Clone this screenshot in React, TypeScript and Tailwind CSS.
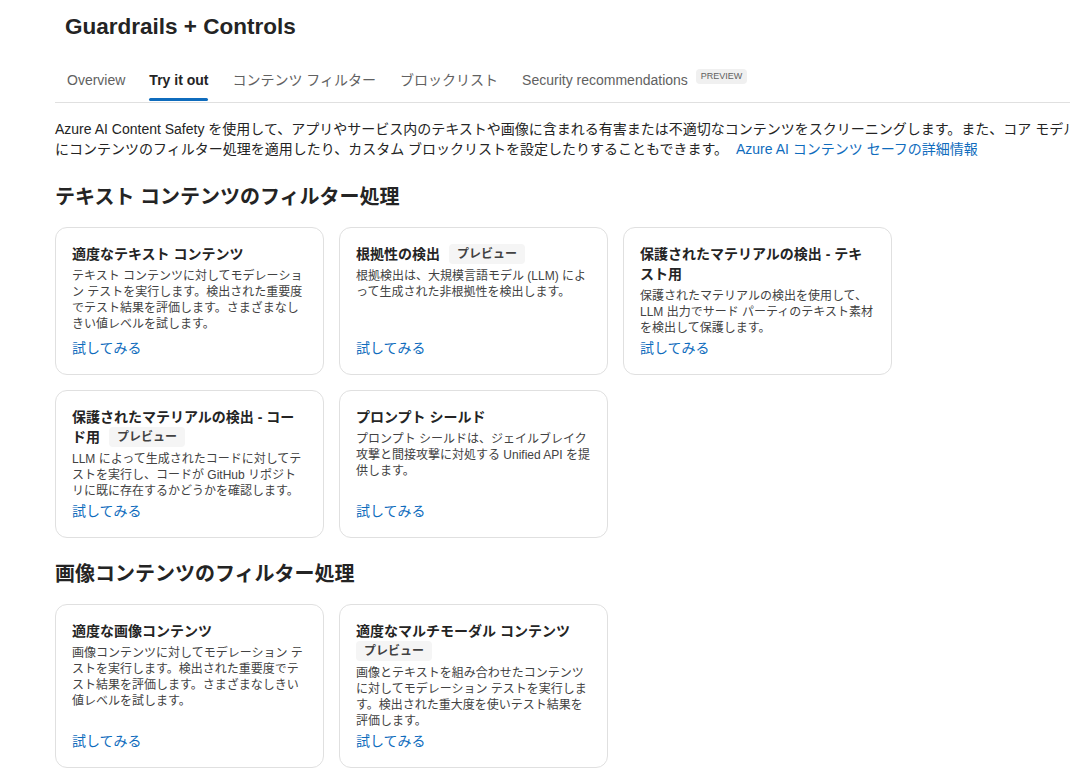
type Feature = {
  title: string;
  body: string;
  preview?: boolean;
};

const TABS = ["Overview", "Try it out", "コンテンツ フィルター", "ブロックリスト", "Security recommendations"];

const TEXT_FEATURES: Feature[] = [
  {
    title: "適度なテキスト コンテンツ",
    body: "テキスト コンテンツに対してモデレーション テストを実行します。検出された重要度でテスト結果を評価します。さまざまなしきい値レベルを試します。"
  },
  {
    title: "根拠性の検出",
    preview: true,
    body: "根拠検出は、大規模言語モデル (LLM) によって生成された非根拠性を検出します。"
  },
  {
    title: "保護されたマテリアルの検出 - テキスト用",
    body: "保護されたマテリアルの検出を使用して、LLM 出力でサード パーティのテキスト素材を検出して保護します。"
  },
  {
    title: "保護されたマテリアルの検出 - コード用",
    preview: true,
    body: "LLM によって生成されたコードに対してテストを実行し、コードが GitHub リポジトリに既に存在するかどうかを確認します。"
  },
  {
    title: "プロンプト シールド",
    body: "プロンプト シールドは、ジェイルブレイク攻撃と間接攻撃に対処する Unified API を提供します。"
  }
];

const IMAGE_FEATURES: Feature[] = [
  {
    title: "適度な画像コンテンツ",
    body: "画像コンテンツに対してモデレーション テストを実行します。検出された重要度でテスト結果を評価します。さまざまなしきい値レベルを試します。"
  },
  {
    title: "適度なマルチモーダル コンテンツ",
    preview: true,
    body: "画像とテキストを組み合わせたコンテンツに対してモデレーション テストを実行します。検出された重大度を使いテスト結果を評価します。"
  }
];

function PreviewBadge() {
  return (
    <span className="inline-flex h-5 items-center rounded bg-[#f5f5f5] px-2 align-top text-xs font-semibold text-[#424242]">
      プレビュー
    </span>
  );
}

function FeatureCard({ feature }: { feature: Feature }) {
  return (
    <div className="flex flex-col rounded-xl border border-[#e0e0e0] bg-white p-4">
      <h3 className="text-sm font-semibold leading-5 text-[#242424]">
        {feature.title}
        {feature.preview && (
          <>
            <span className="[word-spacing:5px]"> </span>
            <PreviewBadge />
          </>
        )}
      </h3>
      <p className="mt-1 text-xs leading-4 text-[#424242]">{feature.body}</p>
      <a href="#" className="mt-auto pt-0.5 text-sm leading-5 text-[#0f6cbd]">
        試してみる
      </a>
    </div>
  );
}

function FeatureGrid({ items }: { items: Feature[] }) {
  return (
    <div className="mt-4 grid grid-cols-[repeat(3,269px)] gap-[15px]">
      {items.map((item) => (
        <FeatureCard key={item.title} feature={item} />
      ))}
    </div>
  );
}

export default function App() {
  const active = "Try it out";

  return (
    <div className="min-h-screen overflow-hidden bg-white font-['Liberation_Sans','Noto_Sans_CJK_JP',sans-serif] text-[#242424]">
      <h1 className="pl-[65px] pt-3 text-[22.5px] font-bold leading-[30px]">Guardrails + Controls</h1>

      <div className="ml-[55px] mt-[18px] flex border-b border-[#e0e0e0]">
        {TABS.map((tab) => (
          <div key={tab} className="relative flex items-start px-3 pb-3 pt-[10px] text-sm leading-5">
            <span className={tab === active ? "font-bold text-[#242424]" : "text-[#616161]"}>{tab}</span>
            {tab === "Security recommendations" && (
              <span className="-mt-px ml-2 h-[15px] rounded-sm bg-[#f0f0f0] px-[5px] text-[9px] leading-[15px] text-[#616161]">
                PREVIEW
              </span>
            )}
            {tab === active && <span className="absolute bottom-px left-3 right-3 h-[3px] rounded-full bg-[#0f6cbd]" />}
          </div>
        ))}
      </div>

      <div className="pl-[55px]">
        <p className="mt-4 w-[1100px] text-sm leading-5">
          Azure AI Content Safety を使用して、アプリやサービス内のテキストや画像に含まれる有害または不適切なコンテンツをスクリーニングします。また、コア モデル
          <br />
          にコンテンツのフィルター処理を適用したり、カスタム ブロックリストを設定したりすることもできます。{" "}
          <a href="#" className="ml-1 text-[#0f6cbd]">
            Azure AI コンテンツ セーフの詳細情報
          </a>
        </p>

        <h2 className="mt-6 text-xl font-bold leading-7">テキスト コンテンツのフィルター処理</h2>
        <FeatureGrid items={TEXT_FEATURES} />

        <h2 className="mt-[22px] text-xl font-bold leading-7">画像コンテンツのフィルター処理</h2>
        <FeatureGrid items={IMAGE_FEATURES} />
      </div>
    </div>
  );
}
